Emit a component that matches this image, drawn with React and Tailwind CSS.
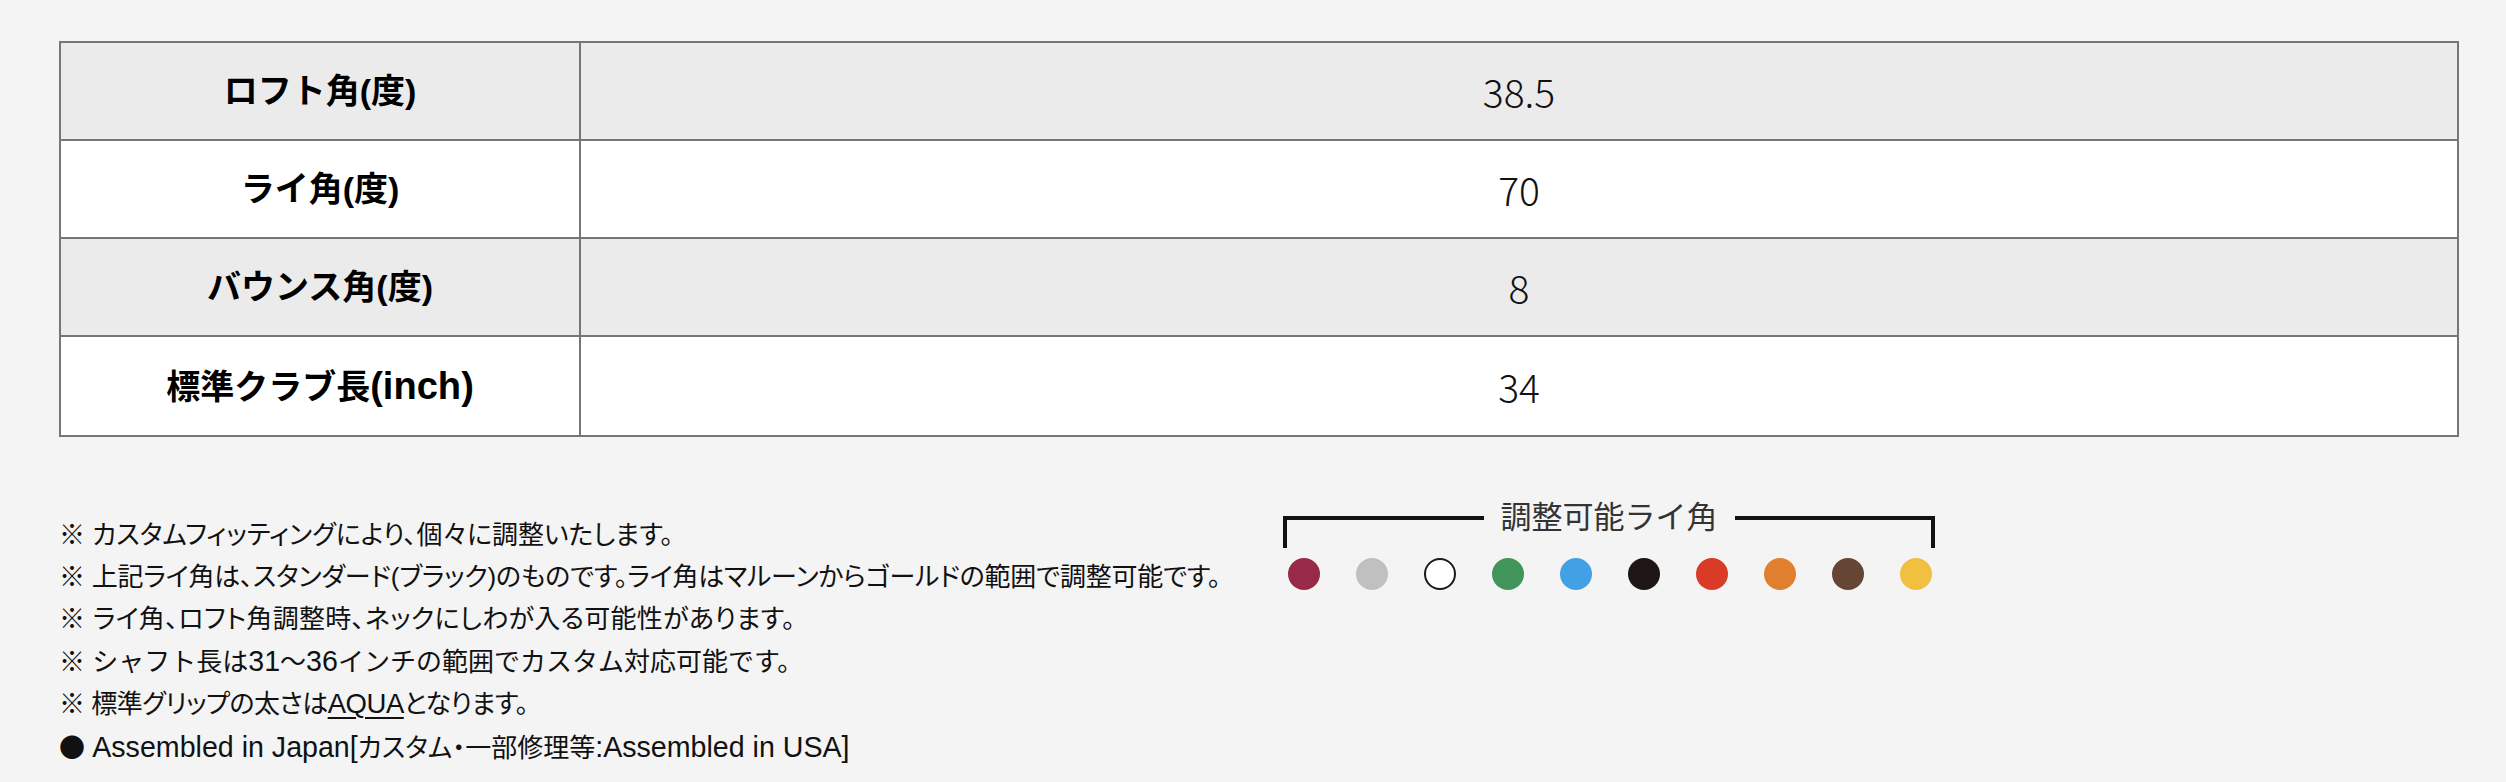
const specs = [
  { label: "ロフト角(度)", value: "38.5" },
  { label: "ライ角(度)", value: "70" },
  { label: "バウンス角(度)", value: "8" },
  { label: "標準クラブ長", unit: "(inch)", value: "34" },
];

const swatches = [
  "bg-[#962a48]",
  "bg-[#c0c0c0]",
  "bg-white border-2 border-[#1a1a1a]",
  "bg-[#41955a]",
  "bg-[#42a0e4]",
  "bg-[#1e1614]",
  "bg-[#d93b26]",
  "bg-[#e07f2e]",
  "bg-[#654533]",
  "bg-[#f2c041]",
];

// latin runs render a bit larger than the kana next to them
function L({ children }) {
  return <span className="text-[1.1em]">{children}</span>;
}

function SpecTable() {
  return (
    <div className="w-[2400px] border-2 border-[#767676]">
      {specs.map((row, i) => (
        <div
          key={row.label}
          className={
            "grid grid-cols-[520px_1fr] h-[98px] " +
            (i % 2 === 0 ? "bg-[#ebebeb] " : "bg-white ") +
            (i < specs.length - 1 ? "border-b-2 border-[#767676]" : "")
          }
        >
          <div className="flex items-center justify-center border-r-2 border-[#767676] text-[34px] leading-[40px] font-bold text-black">
            <span>
              {row.label}
              {row.unit && <span className="text-[1.12em]">{row.unit}</span>}
            </span>
          </div>
          <div className="flex items-center justify-center text-[39px] font-light text-[#111] font-['Noto_Sans_CJK_JP',sans-serif]">
            {row.value}
          </div>
        </div>
      ))}
    </div>
  );
}

function Notes() {
  return (
    <div className="w-[1224px] shrink-0 whitespace-nowrap text-[26px] leading-[42px] text-[#111]">
      <p className="[font-feature-settings:'palt']">※ カスタムフィッティングにより、個々に調整いたします。</p>
      <p className="[font-feature-settings:'palt'] tracking-[-0.2px]">
        ※ 上記ライ角は、スタンダード(ブラック)のものです。ライ角はマルーンからゴールドの範囲で調整可能です。
      </p>
      <p className="[font-feature-settings:'palt'] tracking-[0.3px]">※ ライ角、ロフト角調整時、ネックにしわが入る可能性があります。</p>
      <p>
        ※ シャフト長は<L>31</L>～<L>36</L>インチの範囲でカスタム対応可能です。
      </p>
      <p className="[font-feature-settings:'palt'] tracking-[-0.5px]">
        ※ 標準グリップの太さは
        <span className="text-[1.06em] underline underline-offset-[4px] decoration-[1.5px]">AQUA</span>
        となります。
      </p>
      <p className="[font-feature-settings:'palt']">
        <span className="font-['Noto_Sans_CJK_JP']">●</span> <L>Assembled in Japan[</L>カスタム・一部修理等<L>:Assembled in USA]</L>
      </p>
    </div>
  );
}

function LieSwatches() {
  return (
    <div className="w-[652px] mt-[2px]">
      <div className="flex items-start">
        <div className="flex-1 h-[32px] border-t-4 border-l-4 border-[#111]" />
        <span className="px-[17px] -mt-[15px] text-[31px] leading-[34px] text-[#333]">
          調整可能ライ角
        </span>
        <div className="flex-1 h-[32px] border-t-4 border-r-4 border-[#111]" />
      </div>
      <div className="flex gap-[36px] pl-[5px] mt-[10px]">
        {swatches.map((c, i) => (
          <span key={i} className={"block w-[32px] h-[32px] rounded-full " + c} />
        ))}
      </div>
    </div>
  );
}

export default function App() {
  return (
    <div className="min-h-[782px] w-full bg-[#f4f4f4] pl-[59px] pt-[41px] font-['Liberation_Sans','Noto_Sans_CJK_JP',sans-serif]">
      <SpecTable />
      <div className="flex mt-[77px]">
        <Notes />
        <LieSwatches />
      </div>
    </div>
  );
}
